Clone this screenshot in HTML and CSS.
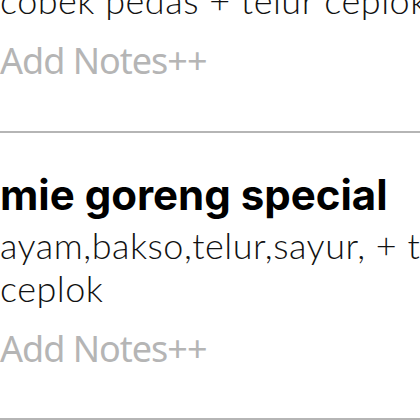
FILE: index.html
```html
<!DOCTYPE html>
<html lang="en">
<head>
    <meta charset="UTF-8">
    <meta name="viewport" content="width=device-width, initial-scale=1.0">
    <title>Keranjang</title>
    <link rel="stylesheet" href="styles.css">
</head>
<body>
    <div class="order-list">
        <div class="order-item first">
            <p class="item-desc">cobek pedas + telur ceplok</p>
            <p class="add-notes">Add Notes++</p>
        </div>
        <div class="order-item">
            <h2 class="item-name">mie goreng special</h2>
            <p class="item-desc">ayam,bakso,telur,sayur, + telur ceplok</p>
            <p class="add-notes">Add Notes++</p>
        </div>
    </div>
</body>
</html>
```

FILE: styles.css
```css
* {
    margin: 0;
    padding: 0;
    box-sizing: border-box;
}

html, body {
    overflow: hidden;
}

body {
    background: #fff;
    width: 420px;
    height: 420px;
}

.order-list {
    width: 520px;
    margin-top: -21px;
}

.order-item {
    padding-top: 38px;
    padding-bottom: 47px;
    border-bottom: 2px solid #b5b5b5;
}

.order-item.first {
    padding-top: 0;
    padding-bottom: 48px;
}

.item-name {
    font-family: Inter, "Liberation Sans", sans-serif;
    font-weight: 700;
    font-size: 42px;
    line-height: 48px;
    color: #000;
}

.item-name + .item-desc {
    margin-top: 5px;
}

.item-desc {
    font-family: Lato, "Liberation Sans", sans-serif;
    font-weight: 300;
    font-size: 36px;
    line-height: 43px;
    letter-spacing: 0.5px;
    color: #111;
}

.add-notes {
    margin-top: 17px;
    font-family: "Noto Sans", sans-serif;
    font-size: 36px;
    line-height: 44px;
    letter-spacing: -1px;
    color: #b5b5b5;
}
```
